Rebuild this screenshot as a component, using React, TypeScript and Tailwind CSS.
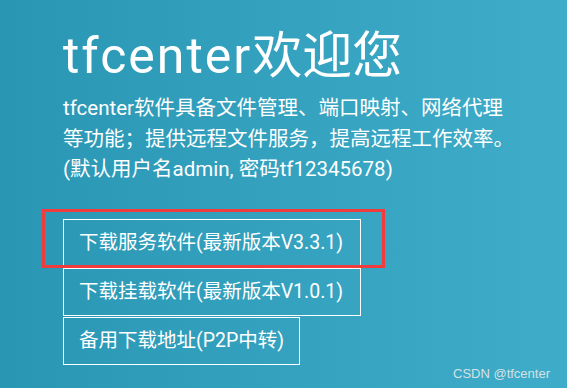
import React from 'react'

const links = [
  '下载服务软件(最新版本V3.3.1)',
  '下载挂载软件(最新版本V1.0.1)',
  '备用下载地址(P2P中转)',
]

export default function App() {
  return (
    <div
      className="relative w-[567px] h-[388px] overflow-hidden bg-gradient-to-r from-[#2996b4] to-[#3fadc9] text-white"
      style={{ fontFamily: 'Roboto, "Noto Sans CJK SC", sans-serif' }}
    >
      <div className="pl-[63px] pt-[31px]">
        <h1 className="text-[50px] leading-[50px] font-normal">
          <span className="tracking-[2px]">tfcenter</span>欢迎您
        </h1>
        <p className="mt-[12px] w-[455px] text-[20.5px] leading-[30.5px]">
          tfcenter软件具备文件管理、端口映射、网络代理等功能；提供远程文件服务，提高远程工作效率。
          <br />
          (默认用户名admin, 密码tf12345678)
        </p>

        {/* download links */}
        <div className="mt-[34px] flex flex-col items-start gap-px">
          {links.map((label, i) => (
            <a
              key={label}
              href="#"
              className={`flex h-[48px] items-center whitespace-nowrap border border-white px-[15px] text-[19.5px] text-white ${
                i < 2 ? 'w-[298px]' : ''
              }`}
            >
              {label}
            </a>
          ))}
        </div>
      </div>

      {/* annotation box */}
      <div className="absolute left-[42px] top-[209px] w-[343px] h-[59px] border-[3px] border-[#f03c3c]" />

      <div
        className="absolute left-[453px] top-[364px] text-[13px] text-[#d3e1e6]"
        style={{ fontFamily: '"Liberation Sans", Arial, sans-serif' }}
      >
        CSDN @tfcenter
      </div>
    </div>
  )
}
